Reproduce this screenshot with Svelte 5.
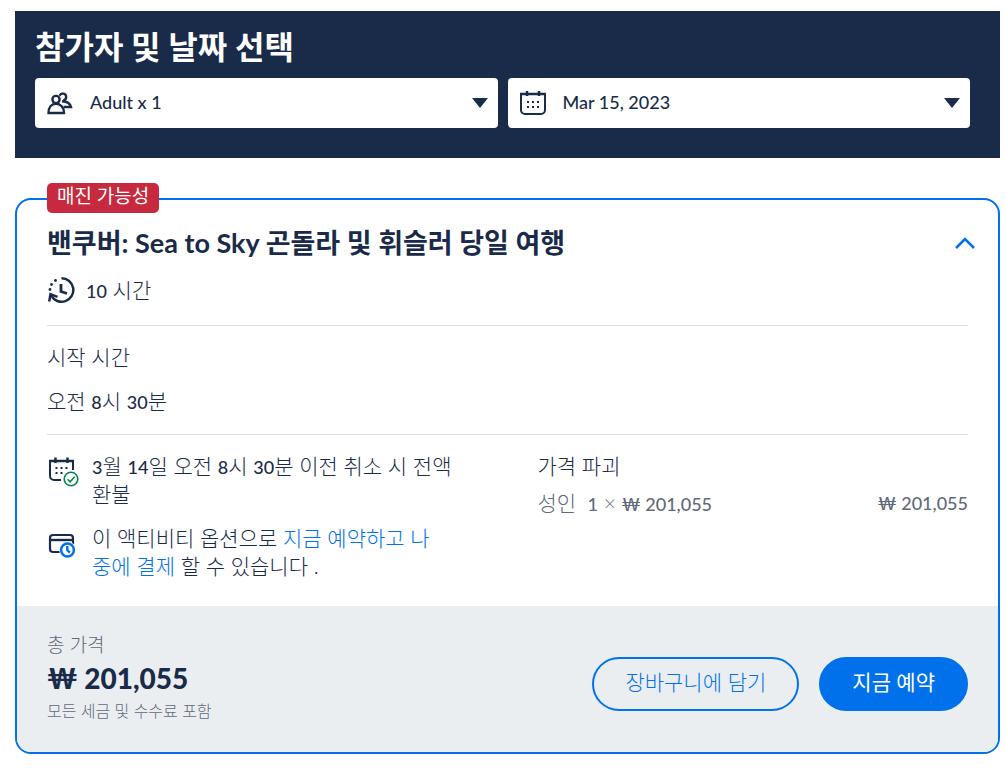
<script>
  let participants = $state("Adult x 1");
  let date = $state("Mar 15, 2023");
  let open = $state(true);
</script>

<main>
  <section class="picker">
    <h1>참가자 및 날짜 선택</h1>
    <div class="fields">
      <div class="field">
        <svg class="field-icon" width="26" height="26" viewBox="0 0 26 26" aria-hidden="true">
          <g fill="none" stroke="#1a2b49" stroke-width="2.4">
            <circle cx="9" cy="9.5" r="3.6" />
            <path d="M12.6 5.800a3.400 3.400 0 1 1 3.600 4.600" />
            <path d="M1.500 23c0-5.600 3-9.200 7.500-9.200s8 3.600 8 9.200z" />
            <path d="M15 11.300c4.500.200 8 2 9 5.700h-7.500" />
          </g>
        </svg>
        <select aria-label="참가자" bind:value={participants}>
          <option>Adult x 1</option>
          <option>Adult x 2</option>
        </select>
        <svg class="arrow" width="16" height="10" viewBox="0 0 16 10" aria-hidden="true">
          <path d="M0 0h16L8 10z" fill="#1a2b49" />
        </svg>
      </div>
      <div class="field">
        <svg class="field-icon" width="26" height="26" viewBox="0 0 26 26" aria-hidden="true">
          <path d="M1 4h24v16a4 4 0 0 1-4 4H5a4 4 0 0 1-4-4z" fill="none" stroke="#1a2b49" stroke-width="2" />
          <path d="M0 4h26M7 1v5M19 1v5" stroke="#1a2b49" stroke-width="2.500" />
          <path d="M7 12h12M7 17h12" stroke="#1a2b49" stroke-width="2" stroke-dasharray="2 3" />
        </svg>
        <select aria-label="날짜" bind:value={date}>
          <option>Mar 15, 2023</option>
          <option>Mar 16, 2023</option>
        </select>
        <svg class="arrow" width="16" height="10" viewBox="0 0 16 10" aria-hidden="true">
          <path d="M0 0h16L8 10z" fill="#1a2b49" />
        </svg>
      </div>
    </div>
  </section>

  <article class="card">
    <span class="badge">매진 가능성</span>
    <div class="body">
      <header>
        <h2>밴쿠버: Sea to Sky 곤돌라 및 휘슬러 당일 여행</h2>
        <button class="toggle" aria-label="접기" aria-expanded={open} onclick={() => (open = !open)}>
          <svg class:closed={!open} width="22" height="14" viewBox="0 0 22 14" aria-hidden="true">
            <path d="M2 12l9-9 9 9" fill="none" stroke="#0071eb" stroke-width="2.500" />
          </svg>
        </button>
      </header>
      <p class="duration">
        <svg width="28" height="28" viewBox="0 0 28 28" aria-hidden="true">
          <path d="M14.500 2.200a11.800 11.800 0 1 1-10.300 17.500" fill="none" stroke="#1a2b49" stroke-width="2.500" />
          <path d="M2.200 25.500l1.300-7.300 7 2.600" fill="none" stroke="#1a2b49" stroke-width="2.500" />
          <path d="M14 8v7.500l6 2" fill="none" stroke="#1a2b49" stroke-width="2.800" />
          <g fill="#1a2b49">
            <circle cx="3" cy="13.500" r="1.400" />
            <circle cx="4.500" cy="8.500" r="1.400" />
            <circle cx="8.500" cy="4.500" r="1.400" />
          </g>
        </svg>
        <span><b>10</b> 시간</span>
      </p>

      {#if open}
        <div class="start">
          <p>시작 시간</p>
          <p>오전 <b>8</b>시 <b>30</b>분</p>
        </div>

        <div class="details">
          <ul class="perks">
            <li>
              <svg width="32" height="32" viewBox="0 0 32 32" aria-hidden="true">
                <path d="M14 25H7a4 4 0 0 1-4-4V6h23v9" fill="none" stroke="#1a2b49" stroke-width="2" />
                <path d="M2 6h25M8.500 2.500v5.500M20.500 2.500v5.500" stroke="#1a2b49" stroke-width="2.500" />
                <path d="M8.500 13h12M8.500 18h8" stroke="#1a2b49" stroke-width="2" stroke-dasharray="2 3" />
                <circle cx="24" cy="24" r="6.800" fill="#fff" stroke="#078548" stroke-width="1.600" />
                <path d="M20.500 24.200l2.600 2.600 4.600-5" fill="none" stroke="#078548" stroke-width="1.600" />
              </svg>
              <p><b>3</b>월 <b>14</b>일 오전 <b>8</b>시 <b>30</b>분 이전 취소 시 전액 환불</p>
            </li>
            <li>
              <svg width="32" height="32" viewBox="0 0 32 32" aria-hidden="true">
                <path d="M13 25H6a3 3 0 0 1-3-3V11a3 3 0 0 1 3-3h17a3 3 0 0 1 3 3v6" fill="none" stroke="#1a2b49" stroke-width="2.200" />
                <path d="M3 13h23" stroke="#1a2b49" stroke-width="2.400" />
                <circle cx="20.500" cy="23" r="8.400" fill="#fff" />
                <circle cx="20.500" cy="23" r="6.400" fill="none" stroke="#0071eb" stroke-width="2.500" />
                <path d="M20.300 19v4l2.600 2.600" fill="none" stroke="#0071eb" stroke-width="2.400" />
              </svg>
              <p>이 액티비티 옵션으로 <a href="#pay-later">지금 예약하고 나<br />중에 결제</a> 할 수 있습니다 .</p>
            </li>
          </ul>
          <div class="prices">
            <p>가격 파괴</p>
            <div class="price-row">
              <span>성인&nbsp; <b>1</b> × <b>₩ 201,055</b></span>
              <b>₩ 201,055</b>
            </div>
          </div>
        </div>
      {/if}
    </div>

    <footer>
      <div class="total">
        <p class="total-label">총 가격</p>
        <p class="total-price">₩ 201,055</p>
        <p class="total-note">모든 세금 및 수수료 포함</p>
      </div>
      <div class="actions">
        <button class="cart">장바구니에 담기</button>
        <button class="book">지금 예약</button>
      </div>
    </footer>
  </article>
</main>

<style>
  :global(body) {
    margin: 0;
    background: #fff;
  }

  main {
    padding: 11px 6px 16px 15px;
    color: #1a2b49;
    font-family: Lato, "Noto Sans CJK KR", sans-serif;
    font-size: 21px;
    font-weight: 300;
    line-height: 28px;
  }

  h1,
  h2,
  p,
  ul {
    margin: 0;
    padding: 0;
  }

  .picker {
    padding: 16px 30px 30px 20px;
    background: #1a2b49;
  }

  h1 {
    margin-bottom: 11px;
    color: #fff;
    font-size: 32px;
    line-height: 40px;
    font-weight: 700;
  }

  .fields {
    display: grid;
    grid-template-columns: 1fr 1fr;
    gap: 10px;
  }

  .field {
    display: grid;
    align-items: center;
    height: 50px;
    background: #fff;
    border-radius: 4px;
  }

  .field > * {
    grid-area: 1 / 1;
  }

  .field-icon {
    margin-left: 12px;
    pointer-events: none;
  }

  .arrow {
    justify-self: end;
    margin-right: 10px;
    pointer-events: none;
  }

  select {
    width: 100%;
    height: 50px;
    padding: 0 36px 2px 55px;
    appearance: none;
    border: 0;
    border-radius: 4px;
    background: transparent;
    color: #1a2b49;
    font-family: inherit;
    font-size: 18px;
    font-weight: 500;
  }

  .card {
    position: relative;
    margin-top: 40px;
    border: 2px solid #0071eb;
    border-radius: 16px;
  }

  .badge {
    position: absolute;
    top: -17px;
    left: 30px;
    padding: 0 10px 4px;
    border-radius: 5px;
    background: #c7293e;
    color: #fff;
    font-size: 19px;
    line-height: 26px;
    font-weight: 400;
  }

  .body {
    padding: 27px 30px 26px;
  }

  header {
    display: flex;
    align-items: center;
    justify-content: space-between;
  }

  h2 {
    font-size: 27px;
    line-height: 32px;
    font-weight: 700;
  }

  .toggle {
    display: flex;
    margin-right: -8px;
    padding: 0;
    border: 0;
    background: none;
    cursor: pointer;
  }

  .closed {
    transform: rotate(180deg);
  }

  .duration {
    display: flex;
    align-items: center;
    gap: 11px;
    margin-top: 17px;
  }

  .start {
    display: grid;
    gap: 16px;
    margin-top: 21px;
    padding: 17px 0 19px;
    border-top: 1px solid #dcdfe4;
    border-bottom: 1px solid #dcdfe4;
  }

  .details {
    display: grid;
    grid-template-columns: 1fr 1fr;
    padding-top: 17px;
  }

  .perks {
    display: grid;
    gap: 16px;
    padding-right: 40px;
    list-style: none;
  }

  li {
    display: flex;
    gap: 13px;
  }

  li svg {
    flex: none;
    margin-top: 3px;
  }

  a {
    color: #0071eb;
    text-decoration: none;
  }

  .prices {
    display: grid;
    align-content: start;
    gap: 9px;
    padding-left: 30px;
  }

  .price-row {
    display: flex;
    align-items: center;
    justify-content: space-between;
    color: #63687a;
  }

  b {
    font-size: 18px;
    line-height: 18px;
    font-weight: 500;
  }

  footer {
    display: flex;
    align-items: center;
    justify-content: space-between;
    padding: 26px 30px 28px;
    border-radius: 0 0 14px 14px;
    background: #ebeef1;
  }

  .total-label,
  .total-note {
    color: #63687a;
    font-size: 19px;
    line-height: 26px;
  }

  .total-price {
    font-size: 28px;
    line-height: 40px;
    font-weight: 900;
  }

  .total-note {
    font-size: 16px;
  }

  .actions {
    display: flex;
    gap: 20px;
    margin-top: 12px;
  }

  .actions button {
    padding: 0 31px 6px;
    height: 54px;
    border: 2px solid #0071eb;
    border-radius: 27px;
    font-family: inherit;
    font-size: 21px;
    cursor: pointer;
  }

  .cart {
    background: transparent;
    color: #0071eb;
    font-weight: 300;
  }

  .book {
    background: #0071eb;
    color: #fff;
    font-weight: 400;
  }
</style>
